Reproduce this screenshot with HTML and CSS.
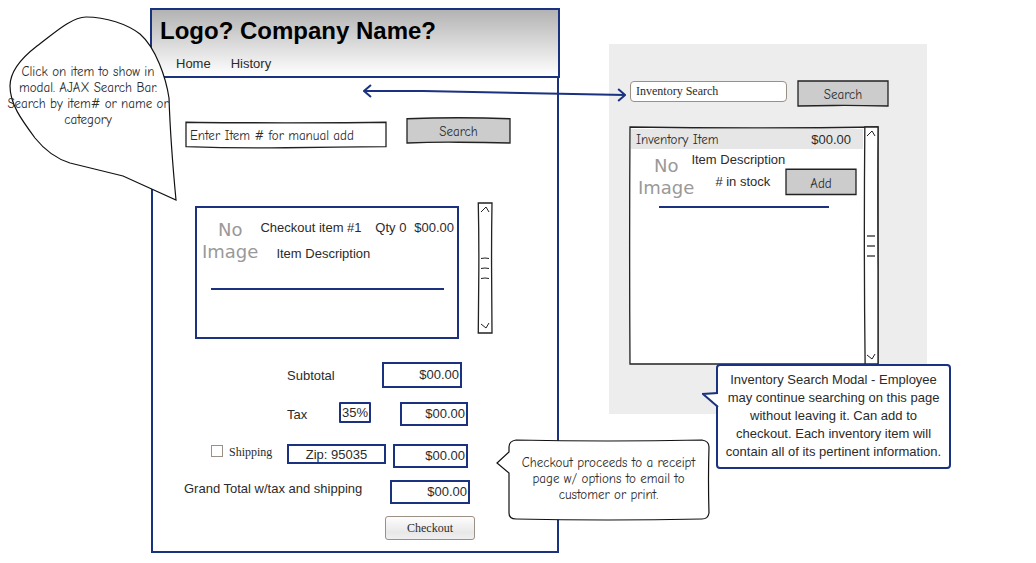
FILE: index.html
```html
<!DOCTYPE html>
<html lang="en">
<head>
<meta charset="utf-8">
<title>Checkout wireframe</title>
<link rel="stylesheet" href="styles.css">
</head>
<body>
<main class="board">
  <section class="page">
    <header class="page-header">
      <h1>Logo? Company Name?</h1>
      <nav class="nav"><a href="#home">Home</a><a href="#history">History</a></nav>
    </header>
    <form class="page-body">
      <div class="search-row">
        <div class="sketch item-field">
          <svg class="outline" viewBox="0 0 100 100" preserveAspectRatio="none" aria-hidden="true"><path d="M0 1Q15 3 50 3T100 1L100 95Q75 96 50 99T0 95Z"/></svg>
          <input class="hand" type="text" aria-label="Item number" value="Enter Item # for manual add">
        </div>
        <button class="sketch hand grey search-button" type="button">
          <svg class="outline" viewBox="0 0 100 100" preserveAspectRatio="none" aria-hidden="true"><path d="M0 3Q25 -1 50 -1T100 3L100 100Q75 98 50 97T0 100Z"/></svg>
          <span>Search</span>
        </button>
      </div>
      <div class="list-row">
        <div class="cart">
          <div class="cart-item">
            <div class="no-image">No<br>Image</div>
            <div class="cart-text">
              <div class="cart-line"><span>Checkout item #1</span><span class="qty">Qty 0</span><span>$00.00</span></div>
              <div class="cart-desc">Item Description</div>
            </div>
          </div>
          <hr class="rule">
        </div>
        <div class="sketch scrollbar">
          <svg class="outline" viewBox="0 0 100 100" preserveAspectRatio="none" aria-hidden="true"><path d="M2 0L100 0Q96 25 97 50T100 100L2 100Q5 75 6 50T2 0Z"/></svg>
          <svg class="mark" viewBox="0 0 9 6" aria-hidden="true"><path d="M0 5L5 0L8 5"/></svg>
          <svg class="grip" viewBox="0 0 9 22" aria-hidden="true"><path d="M0 1.5Q4 0.5 8 1.5M0 11.5Q4 10.5 8 11.5M0 21.5Q4 20.5 8 21.5"/></svg>
          <svg class="mark" viewBox="0 0 9 6" aria-hidden="true"><path d="M0 1L5 5L8 0"/></svg>
        </div>
      </div>
      <div class="totals">
        <div class="total-row subtotal"><label class="label-wide" for="subtotal">Subtotal</label><output id="subtotal" class="box amount tall">$00.00</output></div>
        <div class="total-row tax"><label class="label-tax" for="rate">Tax</label><input id="rate" class="box rate" type="text" value="35%"><output class="box amount narrow">$00.00</output></div>
        <div class="total-row shipping"><input id="ship" class="tick" type="checkbox"><label class="serif label-ship" for="ship">Shipping</label><input class="box zip" type="text" aria-label="Zip code" value="Zip: 95035"><output class="box amount medium">$00.00</output></div>
        <div class="total-row grand"><label class="label-grand" for="grand">Grand Total w/tax and shipping</label><output id="grand" class="box amount">$00.00</output></div>
        <div class="total-row action"><button class="serif checkout" type="submit">Checkout</button></div>
      </div>
    </form>
    <aside class="note note-search hand">
      <svg class="note-shape" viewBox="0 0 168 185" aria-hidden="true"><path d="M77 1C97 1 118 8 131 18C147 32 157 62 160 82C161 112 163 142 167 184L114 160L61 147C45 142 34 132 26 122C12 103 1 88 1 70C1 54 15 40 28 30C43 19 62 1 77 1Z"/></svg>
      <p>Click on item to show in modal. AJAX Search Bar. Search by item# or name or category</p>
    </aside>
    <aside class="note note-checkout hand">
      <svg class="note-shape" viewBox="0 0 213 82" aria-hidden="true"><path d="M19 1Q65 2 111 2T205 1Q212 2 212 8Q211 40 212 74Q211 80 205 80Q110 82 19 80Q12 80 12 74L12 34L0 24L12 13L12 8Q12 2 19 1Z"/></svg>
      <p>Checkout proceeds to a receipt page w/ options to email to customer or print.</p>
    </aside>
  </section>

  <section class="modal">
    <form class="modal-search">
      <input class="serif inventory-field" type="text" aria-label="Inventory search" value="Inventory Search">
      <button class="sketch hand grey modal-button" type="button">
        <svg class="outline" viewBox="0 0 100 100" preserveAspectRatio="none" aria-hidden="true"><path d="M0 0L100 0L100 100Q60 97 40 98T0 100Z"/></svg>
        <span>Search</span>
      </button>
    </form>
    <div class="sketch inventory">
      <svg class="outline" viewBox="0 0 100 100" preserveAspectRatio="none" aria-hidden="true"><path d="M0 0Q25 0.4 50 0.4T100 0L100 100L0 100Q-0.3 50 0 0Z"/></svg>
      <div class="inventory-main">
        <div class="inventory-head"><span class="hand">Inventory Item</span><span>$00.00</span></div>
        <div class="inventory-item">
          <div class="no-image">No<br>Image</div>
          <div class="inventory-text">
            <div>Item Description</div>
            <div class="stock-line"><span># in stock</span>
              <button class="sketch hand grey add-button" type="button">
                <svg class="outline" viewBox="0 0 100 100" preserveAspectRatio="none" aria-hidden="true"><path d="M0 1L100 1L100 98L0 98Z"/></svg>
                <span>Add</span>
              </button>
            </div>
          </div>
        </div>
        <hr class="rule">
      </div>
      <div class="sketch scrollbar">
        <svg class="outline" viewBox="0 0 100 100" preserveAspectRatio="none" aria-hidden="true"><path d="M6 0L100 0Q97 30 100 60L100 100L8 100Q-2 50 6 0Z"/></svg>
        <svg class="mark" viewBox="0 0 9 6" aria-hidden="true"><path d="M0 5L5 0L8 5"/></svg>
        <svg class="grip grip-soft" viewBox="0 0 9 22" aria-hidden="true"><path d="M0 1H8M0 11H8M0 21H8"/></svg>
        <svg class="mark" viewBox="0 0 9 6" aria-hidden="true"><path d="M0 1L5 5L8 0"/></svg>
      </div>
    </div>
    <aside class="note-inventory">
      <svg class="tail" viewBox="0 0 17 18" aria-hidden="true"><path class="tail-fill" d="M17 2L1 3L17 16Z"/><path d="M16 2L1 3L16 16"/></svg>
      <p>Inventory Search Modal - Employee may continue searching on this page without leaving it. Can add to checkout. Each inventory item will contain all of its pertinent information.</p>
    </aside>
  </section>
  <svg class="arrow" viewBox="0 0 264 20" preserveAspectRatio="none" aria-hidden="true"><path d="M1 8L60 8L263 12M8 2L1 8L8 14M256 6L263 12L256 18"/></svg>
</main>
</body>
</html>
```
FILE: styles.css
```css
* { box-sizing: border-box; }

body {
  margin: 0;
  background: #fff;
  color: #2b2b2b;
  font: 13px/16px "Liberation Sans", Arial, sans-serif;
}

p, h1 { margin: 0; }

button, input { font: inherit; color: inherit; margin: 0; }

.hand { font-family: "Comic Sans MS", "Comic Neue", "Noto Sans", sans-serif; font-size: 13px; }
.serif { font-family: "Liberation Serif", "Times New Roman", serif; font-size: 12px; }

.board {
  position: relative;
  display: grid;
  grid-template-columns: minmax(150px, 150fr) minmax(410px, 410fr) 49fr minmax(318px, 318fr) 109fr;
  align-items: start;
  padding: 8px 0 10px;
}

/* Checkout page */
.page { position: relative; grid-column: 2; }

.page-header {
  padding: 5px 8px 3px;
  border: 2px solid #1a3280;
  background: linear-gradient(#b3b3b3, #fff);
}

.page-header h1 { color: #000; font-size: 24px; line-height: 32px; }

.nav { display: flex; gap: 20px; padding: 9px 16px 1px; }
.nav a { color: inherit; text-decoration: none; line-height: 16px; }

.page-body {
  margin: 0 1px;
  padding: 39px 0 11px;
  border: 2px solid #1a3280;
  border-top: 0;
}

.sketch { position: relative; isolation: isolate; }

.outline {
  position: absolute;
  inset: 1px;
  z-index: -1;
  width: calc(100% - 2px);
  height: calc(100% - 2px);
  overflow: visible;
}

.outline path {
  fill: #fff;
  stroke: #222;
  stroke-width: 1.3;
  vector-effect: non-scaling-stroke;
}

.grey { padding: 3px 0 0; border: 0; background: none; }
.grey .outline path { fill: #ccc; }

.search-row { display: flex; gap: 19px; padding: 0 46px 0 32px; }
.item-field { flex: 1; height: 28px; margin-top: 4px; }
.item-field input { width: 100%; height: 28px; padding: 0 5px; border: 0; background: none; }
.search-button { width: 105px; height: 27px; }

.list-row { display: flex; gap: 18px; padding: 53px 64px 0 42px; }

.cart { flex: 1; height: 133px; margin-top: 4px; padding: 11px 3px 0 5px; border: 2px solid #1a3280; }
.cart-item { display: flex; gap: 2px; }
.cart-text { flex: 1; }
.cart-line { display: flex; justify-content: space-between; padding-top: 1px; }
.qty { padding-left: 6px; }
.cart-desc { padding: 10px 16px 0; }

.no-image {
  color: #999;
  font: 18px/22px "DejaVu Sans", Verdana, sans-serif;
  text-align: center;
}

.rule { height: 2px; border: 0; background: #1a3280; }
.cart .rule { margin: 25px 10px 0 9px; }

.scrollbar {
  display: flex;
  flex-direction: column;
  align-items: center;
  justify-content: space-between;
  width: 16px;
  padding: 5px 0;
}
.list-row .scrollbar { height: 132px; }
.mark { width: 9px; height: 6px; }
.grip { width: 9px; height: 22px; }
.mark path, .grip path { fill: none; stroke: #222; }
.grip-soft path { stroke: #777; stroke-width: 2; }

.totals { padding: 23px 0 0; }
.total-row { display: flex; justify-content: flex-end; align-items: flex-start; }
.total-row label { line-height: 16px; padding-top: 5px; }
.subtotal { padding: 0 95px 14px 0; }
.tax { padding: 0 89px 18px 0; }
.shipping { padding: 0 89px 12px 0; }
.grand { padding: 0 87px 12px 0; }
.action { padding: 0 82px 0 0; }

.box { border: 2px solid #1a3280; border-radius: 0; background: #fff; }
.amount { width: 80px; height: 24px; padding: 2px 1px; text-align: right; }
.total-row .tall { height: 26px; padding-top: 3px; }
.narrow { width: 68px; margin-left: 29px; }
.medium { width: 75px; margin-left: 7px; }
.rate { width: 32px; height: 21px; padding: 0; text-align: center; border-radius: 1px; }
.zip { width: 99px; height: 20px; padding: 0; text-align: center; }

.total-row .label-wide { width: 95px; padding-top: 6px; }
.label-tax { width: 52px; }
.total-row .label-ship { width: 58px; padding-top: 0; }
.total-row .label-grand { width: 206px; padding-top: 1px; }

.tick {
  appearance: none;
  width: 12px;
  height: 12px;
  margin: 1px 6px 0 0;
  border: 1px solid #9b9084;
  background: #fff;
}
.tick:checked { background: #1a3280; }

.checkout {
  width: 90px;
  height: 24px;
  padding: 0;
  border: 1px solid #9b9084;
  border-radius: 3px;
  background: linear-gradient(#fdfdfd, #e8e8e8 70%, #f0f0f0);
}

/* Inventory modal */
.modal {
  position: relative;
  grid-column: 4;
  margin-top: 36px;
  padding: 36px 48px 49px 20px;
  background: #ededed;
}

.modal-search { display: flex; gap: 10px; margin: 0 -10px 19px 1px; }
.inventory-field {
  flex: 1;
  min-width: 0;
  height: 21px;
  margin-top: 1px;
  padding: 0 5px;
  border: 1px solid #9b9084;
  border-radius: 4px;
  background: #fff;
}
.modal-button { width: 92px; height: 27px; }

.inventory { display: flex; height: 239px; }
.inventory-main { flex: 1; padding: 3px 0 0 2px; }
.inventory-head {
  display: flex;
  justify-content: space-between;
  padding: 3px 12px 1px 5px;
  background: #e6e6e6;
}
.inventory-item { display: flex; padding: 3px 6px 0 7px; }
.inventory-item .no-image { padding-top: 3px; }
.inventory-text { flex: 1; display: flex; flex-direction: column; margin-left: -3px; }
.stock-line { display: flex; justify-content: space-between; align-items: center; padding-left: 24px; }
.add-button { width: 72px; height: 28px; }
.inventory .rule { margin: 7px 34px 0 28px; }

/* Annotations lying over the wireframes */
.note { position: absolute; text-align: center; }
.note-shape { position: absolute; inset: 0; z-index: -1; width: 100%; height: 100%; overflow: visible; }
.note-shape path { fill: #fff; stroke: #111; stroke-width: 1.2; }
.note-search { isolation: isolate; left: -141px; top: 8px; width: 168px; height: 185px; padding: 48px 10px 0 0; }
.note-search p { margin: 0 -3px; }
.note-checkout { isolation: isolate; left: 347px; top: 431px; width: 213px; height: 82px; padding: 16px 12px 0 22px; line-height: 16px; }

.note-inventory {
  position: absolute;
  left: 107px;
  top: 320px;
  width: 235px;
  padding: 5px 4px 6px;
  border: 2px solid #1a3280;
  border-radius: 4px;
  background: #fff;
  line-height: 18px;
  text-align: center;
}
.tail { position: absolute; left: -16px; top: 25px; width: 17px; height: 18px; }
.tail path { fill: none; stroke: #1a3280; stroke-width: 2; }
.tail .tail-fill { fill: #fff; stroke: none; }

.arrow { position: absolute; left: 35%; top: 83px; width: 25.4%; height: 20px; }
.arrow path { fill: none; stroke: #1a3280; stroke-width: 2; vector-effect: non-scaling-stroke; }
```
